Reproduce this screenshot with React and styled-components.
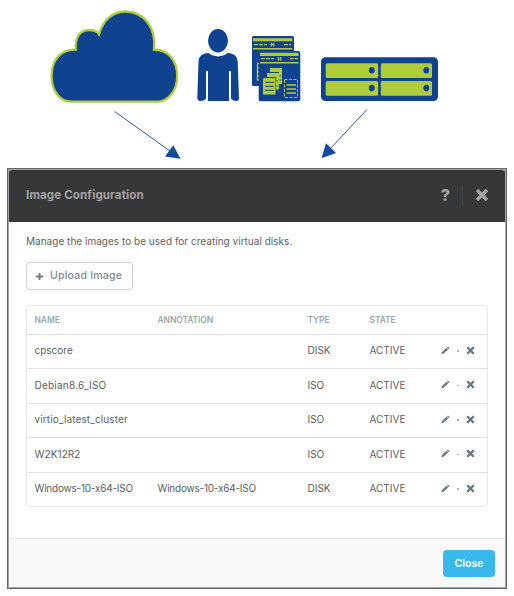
import React from "react";
import styled, { createGlobalStyle } from "styled-components";

const NAVY = "#10438f";
const LIME = "#b0cc3a";

const GlobalStyle = createGlobalStyle`
  * { box-sizing: border-box; }
  body { margin: 0; background: #fff; font-family: "Inter", "Noto Sans", sans-serif; }
`;

const Page = styled.main`
  width: 514px;
  height: 596px;
  display: flex;
  flex-direction: column;
  overflow: hidden;
`;

const Diagram = styled.svg`
  display: block;
  width: 514px;
  height: 168px;
  flex: none;
`;

const Dialog = styled.section`
  width: 500px;
  height: 421px;
  margin-left: 7px;
  display: flex;
  flex-direction: column;
  border: 1px solid #646566;
  border-top-color: #65696b;
  outline: 1px solid #a5a5a5;
  outline-offset: -2px;
  background: #7d8b91;
`;

const Header = styled.header`
  height: 51.5px;
  flex: none;
  display: flex;
  align-items: center;
  padding: 0 17px 1px 18px;
  margin-top: 1px;
  border-radius: 5px 5px 0 0;
  background: #363738;
  color: #a3a3a3;
`;

const Title = styled.h1`
  flex: 1;
  margin: 0;
  font-size: 11.5px;
  line-height: 16px;
  font-weight: 700;
  letter-spacing: ${(p) => p.$spacing}px;
`;

const Help = styled.span`
  font-size: 16px;
  line-height: 20px;
  font-weight: 800;
`;

const Divider = styled.span`
  width: 1px;
  height: 20px;
  margin: 0 12px 0 12px;
  background: #424345;
`;

const Body = styled.div`
  flex: 1;
  padding: 12px 18px 0;
  background: #fff;
`;

const Intro = styled.p`
  margin: 0;
  font-size: 10px;
  line-height: 15px;
  color: #606263;
  letter-spacing: ${(p) => p.$spacing}px;
`;

const UploadButton = styled.button`
  display: flex;
  align-items: center;
  gap: 7px;
  width: 107px;
  height: 28px;
  margin: 13px 0 15px;
  padding: 1px 0 0 9px;
  border: 1px solid #cfd1d2;
  border-radius: 4px;
  background: #fff;
  color: #808990;
  font: 500 10.5px/16px "Inter", sans-serif;
  letter-spacing: ${(p) => p.$spacing}px;
  white-space: nowrap;
`;

const Table = styled.div`
  width: 462px;
  border: 1px solid #e6e8e8;
  border-radius: 4px;
`;

const Row = styled.div`
  display: grid;
  grid-template-columns: 123px 150px 62px 71px 1fr;
  align-items: center;
  height: 34.5px;
  padding: 0 0 2.5px 7.5px;
  border-top: 1px solid #dfe1e1;
  color: #5c5e5f;
  font-size: 10px;
  line-height: 14px;
`;

const HeadRow = styled(Row)`
  height: 28px;
  padding-bottom: 0;
  border-top: 0;
  color: #9aa7ae;
  font-size: 8.5px;
  font-weight: 600;
`;

const Cell = styled.span`
  letter-spacing: ${(p) => p.$spacing || 0}px;
  white-space: nowrap;
`;

const Actions = styled.span`
  display: flex;
  align-items: center;
`;

const Dot = styled.span`
  width: 1.5px;
  height: 1.5px;
  margin: 2px 7.5px 0 7.5px;
  background: #aab0b4;
`;

const Footer = styled.footer`
  height: 50px;
  flex: none;
  display: flex;
  justify-content: flex-end;
  align-items: center;
  padding: 0 11px 1px 0;
  border-top: 1px solid #e9eaea;
  border-radius: 0 0 4px 4px;
  background: #f8f8f8;
`;

const CloseButton = styled.button`
  width: 52px;
  height: 27px;
  padding: 1px 0 0;
  border: 0;
  border-radius: 4px;
  background: #38b8ec;
  color: #fff;
  font: 600 10.5px/16px "Inter", sans-serif;
  letter-spacing: ${(p) => p.$spacing}px;
`;

const Cross = ({ size, color, weight }) => (
  <svg width={size} height={size} viewBox="0 0 10 10">
    <path d="M1.4 1.4 8.6 8.6M8.6 1.4 1.4 8.6" stroke={color} strokeWidth={weight} />
  </svg>
);

const Plus = () => (
  <svg width="7" height="7" viewBox="0 0 7 7">
    <path d="M3.5 0V7M0 3.5H7" stroke="#737d84" strokeWidth="1.9" />
  </svg>
);

const Pencil = () => (
  <svg width="9" height="9" viewBox="0 0 9 9">
    <path d="M.3 8.2 1 5.9 5.5 1.8 7.2 3.6 2.8 7.6ZM6 1.4 7 .6 8.7 2.2 7.7 3.1Z" fill="#687681" />
  </svg>
);

const Cloud = () => (
  <path
    d="M71.5 101.7C59.5 101.7 51.6 90.5 51.6 76C51.6 60 60.5 49.3 75.7 49.7C75 37.5 79.5 30 89 30C94 30 97.5 31.5 99 34.2C103 20 112.5 11.5 125.5 11.5C144 11.5 156.5 28 154 49.8C167.5 49 177.2 60.5 177.2 76C177.2 91 168 101.7 156.5 101.7Z"
    fill={NAVY}
    stroke={LIME}
    strokeWidth="2.3"
  />
);

const Person = () => (
  <g fill={NAVY}>
    <ellipse cx="218" cy="40.7" rx="10" ry="11.7" />
    <path d="M208.5 53.1C213.5 57.5 222.5 57.5 227.5 53.1C234 53.5 237.3 56 237.7 62L239 98.5Q238.8 101 236.5 101Q233 101 231 98.5V71.5Q230 69.8 229 71.5V101H208V71.5Q207 69.8 206 71.5V98.5Q204 101 200.5 101Q197.5 101 197.3 98L198.5 62C199 56 202 53.5 208.5 53.1Z" />
  </g>
);

const Windows = () => (
  <g>
    <rect x="252" y="36" width="42" height="50" rx="1.5" fill={NAVY} />
    <path d="M253 38.2H292.3V41.3H253ZM253 48.1H292.3V49.5H253Z" fill={LIME} />
    <path d="M254 44.6H267M284 44.6H291" stroke={LIME} strokeWidth="1.2" strokeDasharray="4 1" />
    <path d="M271.3 42.8V46.5M273.7 42.8V46.5M271 44.6H274" stroke={LIME} strokeWidth="1.2" />
    <path d="M259 63.5H257.5V80H259M257 68H259M257 72H259M257 76H259" stroke={LIME} strokeWidth="1.3" fill="none" />
    <rect x="258.7" y="51" width="41.6" height="50.3" rx="2" fill={NAVY} />
    <path d="M260 52.7H298.5V55.9H260ZM260 62.1H298.5V63.6H260Z" fill={LIME} />
    <path d="M261 58.7H274M290 58.7H298" stroke={LIME} strokeWidth="1.2" strokeDasharray="4 1" />
    <path d="M278.3 57V60.8M280.7 57V60.8M278 59H281" stroke={LIME} strokeWidth="1.2" />
    <path d="M270 68H282V84H279V72H270ZM267 73H279V89.5H276V77H267ZM264 78H275.5V94.5H263V79Z" fill={LIME} />
    <path d="M265 82.3H274M265 86.3H274M265 90.3H274M279.5 76H281M279.5 80H281M276.5 81H278M276.5 86H278" stroke={NAVY} />
    <path d="M284.5 79.5H297.5V97.5H284.5Z" fill="none" stroke={LIME} strokeDasharray="3 1.5" />
    <path d="M286.5 85H296M286.5 89H296M286.5 93H296" stroke={LIME} strokeWidth="1.4" />
  </g>
);

const Server = ({ bays }) => (
  <g>
    <rect x="321" y="57.2" width="117" height="43.8" rx="4.5" fill={NAVY} />
    {bays.map(([x, y, w, dot]) => (
      <React.Fragment key={`${x}-${y}`}>
        <rect x={x} y={y} width={w} height="14.8" rx="1.5" fill={LIME} />
        <ellipse cx={dot} cy={y + 7.1} rx="2.9" ry="3.3" fill={NAVY} />
      </React.Fragment>
    ))}
  </g>
);

const BAYS = [
  [325.7, 63.2, 52.5, 371.8],
  [380.8, 63.2, 51.2, 426.3],
  [325.7, 81, 52.5, 371.8],
  [380.8, 81, 51.2, 426.3],
];

const Arrows = () => (
  <g fill="#114b9b">
    <path d="M114.7 111.5 170 151M367 109.5 329 150" stroke="#2a5da8" strokeWidth="1" />
    <path d="M180.5 158.7 173.3 145.3 165 156.5ZM321.5 158.3 326 143.3 336 153Z" />
  </g>
);

const IMAGES = [
  { name: "cpscore", type: "DISK", spacing: 0 },
  { name: "Debian8.6_ISO", type: "ISO", spacing: 0.22 },
  { name: "virtio_latest_cluster", type: "ISO", spacing: 0.12 },
  { name: "W2K12R2", type: "ISO", spacing: 0.1 },
  {
    name: "Windows-10-x64-ISO",
    annotation: "Windows-10-x64-ISO",
    type: "DISK",
    spacing: -0.22,
  },
];

export default function App() {
  return (
    <Page>
      <GlobalStyle />
      <Diagram viewBox="0 0 514 168">
        <Cloud />
        <Person />
        <Windows />
        <Server bays={BAYS} />
        <Arrows />
      </Diagram>
      <Dialog>
        <Header>
          <Title $spacing={0.15}>Image Configuration</Title>
          <Help>?</Help>
          <Divider />
          <Cross size={14} color="#a3a3a3" weight={2.5} />
        </Header>
        <Body>
          <Intro $spacing={0.02}>Manage the images to be used for creating virtual disks.</Intro>
          <UploadButton $spacing={0.23}>
            <Plus />
            Upload Image
          </UploadButton>
          <Table>
            <HeadRow>
              <Cell $spacing={-0.1}>NAME</Cell>
              <Cell $spacing={-0.1}>ANNOTATION</Cell>
              <Cell $spacing={-0.1}>TYPE</Cell>
              <Cell $spacing={-0.1}>STATE</Cell>
            </HeadRow>
            {IMAGES.map((image) => (
              <Row key={image.name}>
                <Cell $spacing={image.spacing}>{image.name}</Cell>
                <Cell $spacing={image.spacing}>{image.annotation}</Cell>
                <Cell>{image.type}</Cell>
                <Cell>ACTIVE</Cell>
                <Actions>
                  <Pencil />
                  <Dot />
                  <Cross size={9} color="#687681" weight={2.7} />
                </Actions>
              </Row>
            ))}
          </Table>
        </Body>
        <Footer>
          <CloseButton $spacing={0}>Close</CloseButton>
        </Footer>
      </Dialog>
    </Page>
  );
}
